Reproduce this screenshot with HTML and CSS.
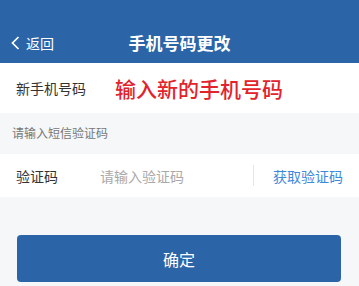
FILE: index.html
```html
<!DOCTYPE html>
<html lang="zh-CN">
<head>
  <meta charset="UTF-8">
  <meta name="viewport" content="width=device-width, initial-scale=1.0">
  <title>手机号码更改</title>
  <link rel="stylesheet" href="styles.css">
</head>
<body>
<header class="top-bar">
  <a class="top-bar__back" href="#">
    <svg width="9" height="14" viewBox="0 0 9 14"><path d="M7.5 1 L1.5 7 L7.5 13" fill="none" stroke="#fff" stroke-width="1.7"/></svg>
    <span>返回</span>
  </a>
  <h1 class="top-bar__title">手机号码更改</h1>
</header>
<section class="form-row">
  <span class="form-row__label">新手机号码</span>
  <span class="form-row__phone">输入新的手机号码</span>
</section>
<p class="form-tip">请输入短信验证码</p>
<section class="form-row form-row--code">
  <span class="form-row__label">验证码</span>
  <input class="form-row__input" type="text" placeholder="请输入验证码">
  <span class="form-row__divider"></span>
  <a class="form-row__send" href="#">获取验证码</a>
</section>
<div class="actions">
  <button class="actions__submit">确定</button>
</div>
</body>
</html>
```

FILE: styles.css
```css
body {
  margin: 0;
  background: #f5f7f9;
  font-family: "Noto Sans CJK SC", "Noto Sans", sans-serif;
  color: #333;
}

.top-bar {
  position: relative;
  height: 63px;
  background: #2b65a8;
  color: #fff;
  display: flex;
  align-items: flex-end;
  box-sizing: border-box;
}

.top-bar__back {
  display: flex;
  align-items: center;
  gap: 6px;
  height: 40px;
  padding-left: 11px;
  color: #fff;
  text-decoration: none;
  font-size: 14px;
}

.top-bar__title {
  position: absolute;
  left: 0;
  right: 0;
  bottom: 0;
  margin: 0;
  height: 40px;
  line-height: 40px;
  text-align: center;
  font-size: 17px;
  font-weight: bold;
  pointer-events: none;
}

.form-row {
  display: flex;
  align-items: center;
  height: 50px;
  padding: 0 16px;
  background: #fff;
}

.form-row__label {
  width: 99px;
  font-size: 14px;
  color: #333;
}

.form-row__phone {
  font-size: 21px;
  font-weight: 500;
  color: #e2232b;
}

.form-tip {
  margin: 0;
  height: 41px;
  line-height: 40px;
  padding-left: 12px;
  font-size: 12px;
  color: #777;
}

.form-row--code {
  height: 43px;
  padding-left: 16px;
  padding-right: 16px;
}

.form-row--code .form-row__label {
  width: 84px;
}

.form-row__input {
  flex: 1;
  min-width: 0;
  border: none;
  outline: none;
  padding: 0;
  font-family: inherit;
  font-size: 14px;
  color: #333;
  background: transparent;
}

.form-row__input::placeholder {
  color: #a9a9a9;
}

.form-row__divider {
  width: 1px;
  height: 21px;
  background: #e6e6e6;
  margin-right: 19px;
}

.form-row__send {
  font-size: 14px;
  color: #3d88dc;
  text-decoration: none;
}

.actions {
  padding: 38px 18px 0 17px;
}

.actions__submit {
  display: block;
  width: 100%;
  height: 47px;
  border: none;
  border-radius: 4px;
  background: #2b65a8;
  color: #fff;
  font-family: inherit;
  font-size: 16px;
  cursor: pointer;
}
```
